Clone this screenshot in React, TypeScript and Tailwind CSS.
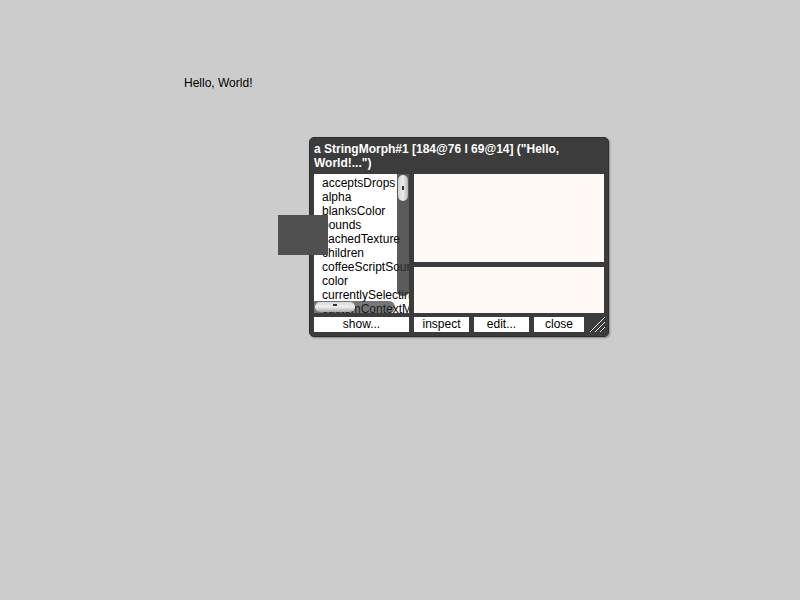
import React from "react";

const props = [
  "acceptsDrops",
  "alpha",
  "blanksColor",
  "bounds",
  "cachedTexture",
  "children",
  "coffeeScriptSource",
  "color",
  "currentlySelecting",
  "customContextMenu",
];

export default function App() {
  return (
    <div
      className="relative w-[800px] h-[600px] bg-[#cccccc] overflow-hidden"
      style={{ fontFamily: '"Liberation Sans", Arial, sans-serif' }}
    >
      <div className="absolute left-[184px] top-[76px] text-[12px] leading-[14px] text-black whitespace-nowrap">
        Hello, World!
      </div>

      <div className="absolute left-[309px] top-[137px] w-[300px] h-[200px] rounded-[5px] bg-[#3c3c3c] border border-[#2e2e2e] shadow-[1px_1px_2px_rgba(0,0,0,0.35)] flex flex-col px-[4px] pt-[4px] pb-[4px]">
        <div className="text-white font-bold text-[12px] leading-[14px] h-[28px] whitespace-pre">
          {'a StringMorph#1 [184@76 l 69@14] ("Hello,\nWorld!...")'}
        </div>
        <div className="flex gap-[5px] mt-[4px] h-[139px]">
          <div className="relative w-[95px] shrink-0 h-full bg-white overflow-hidden">
            <div className="pl-[8px] pt-[2px]">
              {props.map((p) => (
                <div key={p} className="text-[12px] leading-[14px] text-black whitespace-nowrap">
                  {p}
                </div>
              ))}
            </div>
            <div className="absolute right-0 top-0 w-[12px] h-[122px] bg-[rgba(45,45,45,0.78)] rounded-b-[5px]">
              <div className="absolute left-[1px] top-[1px] w-[10px] h-[26px] rounded-[5px] bg-gradient-to-r from-[#cfcfcf] via-[#eeeeee] to-[#b5b5b5] flex items-center justify-center">
                <div className="w-[2px] h-[4px] bg-[#333]" />
              </div>
            </div>
            <div className="absolute left-0 bottom-0 w-[81px] h-[12px] bg-[rgba(45,45,45,0.65)] rounded-r-[6px]">
              <div className="absolute left-[1px] top-[1px] w-[40px] h-[10px] rounded-[5px] bg-gradient-to-b from-[#d8d8d8] via-[#f0f0f0] to-[#a8a8a8] flex justify-center">
                <div className="w-[4px] h-[2px] bg-[#333] mt-[2px]" />
              </div>
            </div>
          </div>
          <div className="flex-1 flex flex-col gap-[5px]">
            <div className="h-[88px] bg-[#fffaf6]" />
            <div className="flex-1 bg-[#fffaf6]" />
          </div>
        </div>
        <div className="flex gap-[5px] mt-[4px] h-[15px] items-stretch">
          <div className="w-[95px] shrink-0 bg-white text-[12px] leading-[15px] text-center text-black">show...</div>
          <div className="w-[55px] shrink-0 bg-white text-[12px] leading-[15px] text-center text-black">inspect</div>
          <div className="w-[55px] shrink-0 bg-white text-[12px] leading-[15px] text-center text-black">edit...</div>
          <div className="w-[50px] shrink-0 bg-white text-[12px] leading-[15px] text-center text-black">close</div>
          <svg width="16" height="16" viewBox="0 0 16 16" className="ml-auto shrink-0 -mt-[1px]">
            <line x1="1" y1="16" x2="16" y2="1" stroke="#eeeeee" strokeWidth="1" />
            <line x1="6" y1="16" x2="16" y2="6" stroke="#eeeeee" strokeWidth="1" />
            <line x1="11" y1="16" x2="16" y2="11" stroke="#eeeeee" strokeWidth="1" />
          </svg>
        </div>
      </div>

      <div className="absolute left-[278px] top-[215px] w-[50px] h-[40px] bg-[#505050]" />
    </div>
  );
}
